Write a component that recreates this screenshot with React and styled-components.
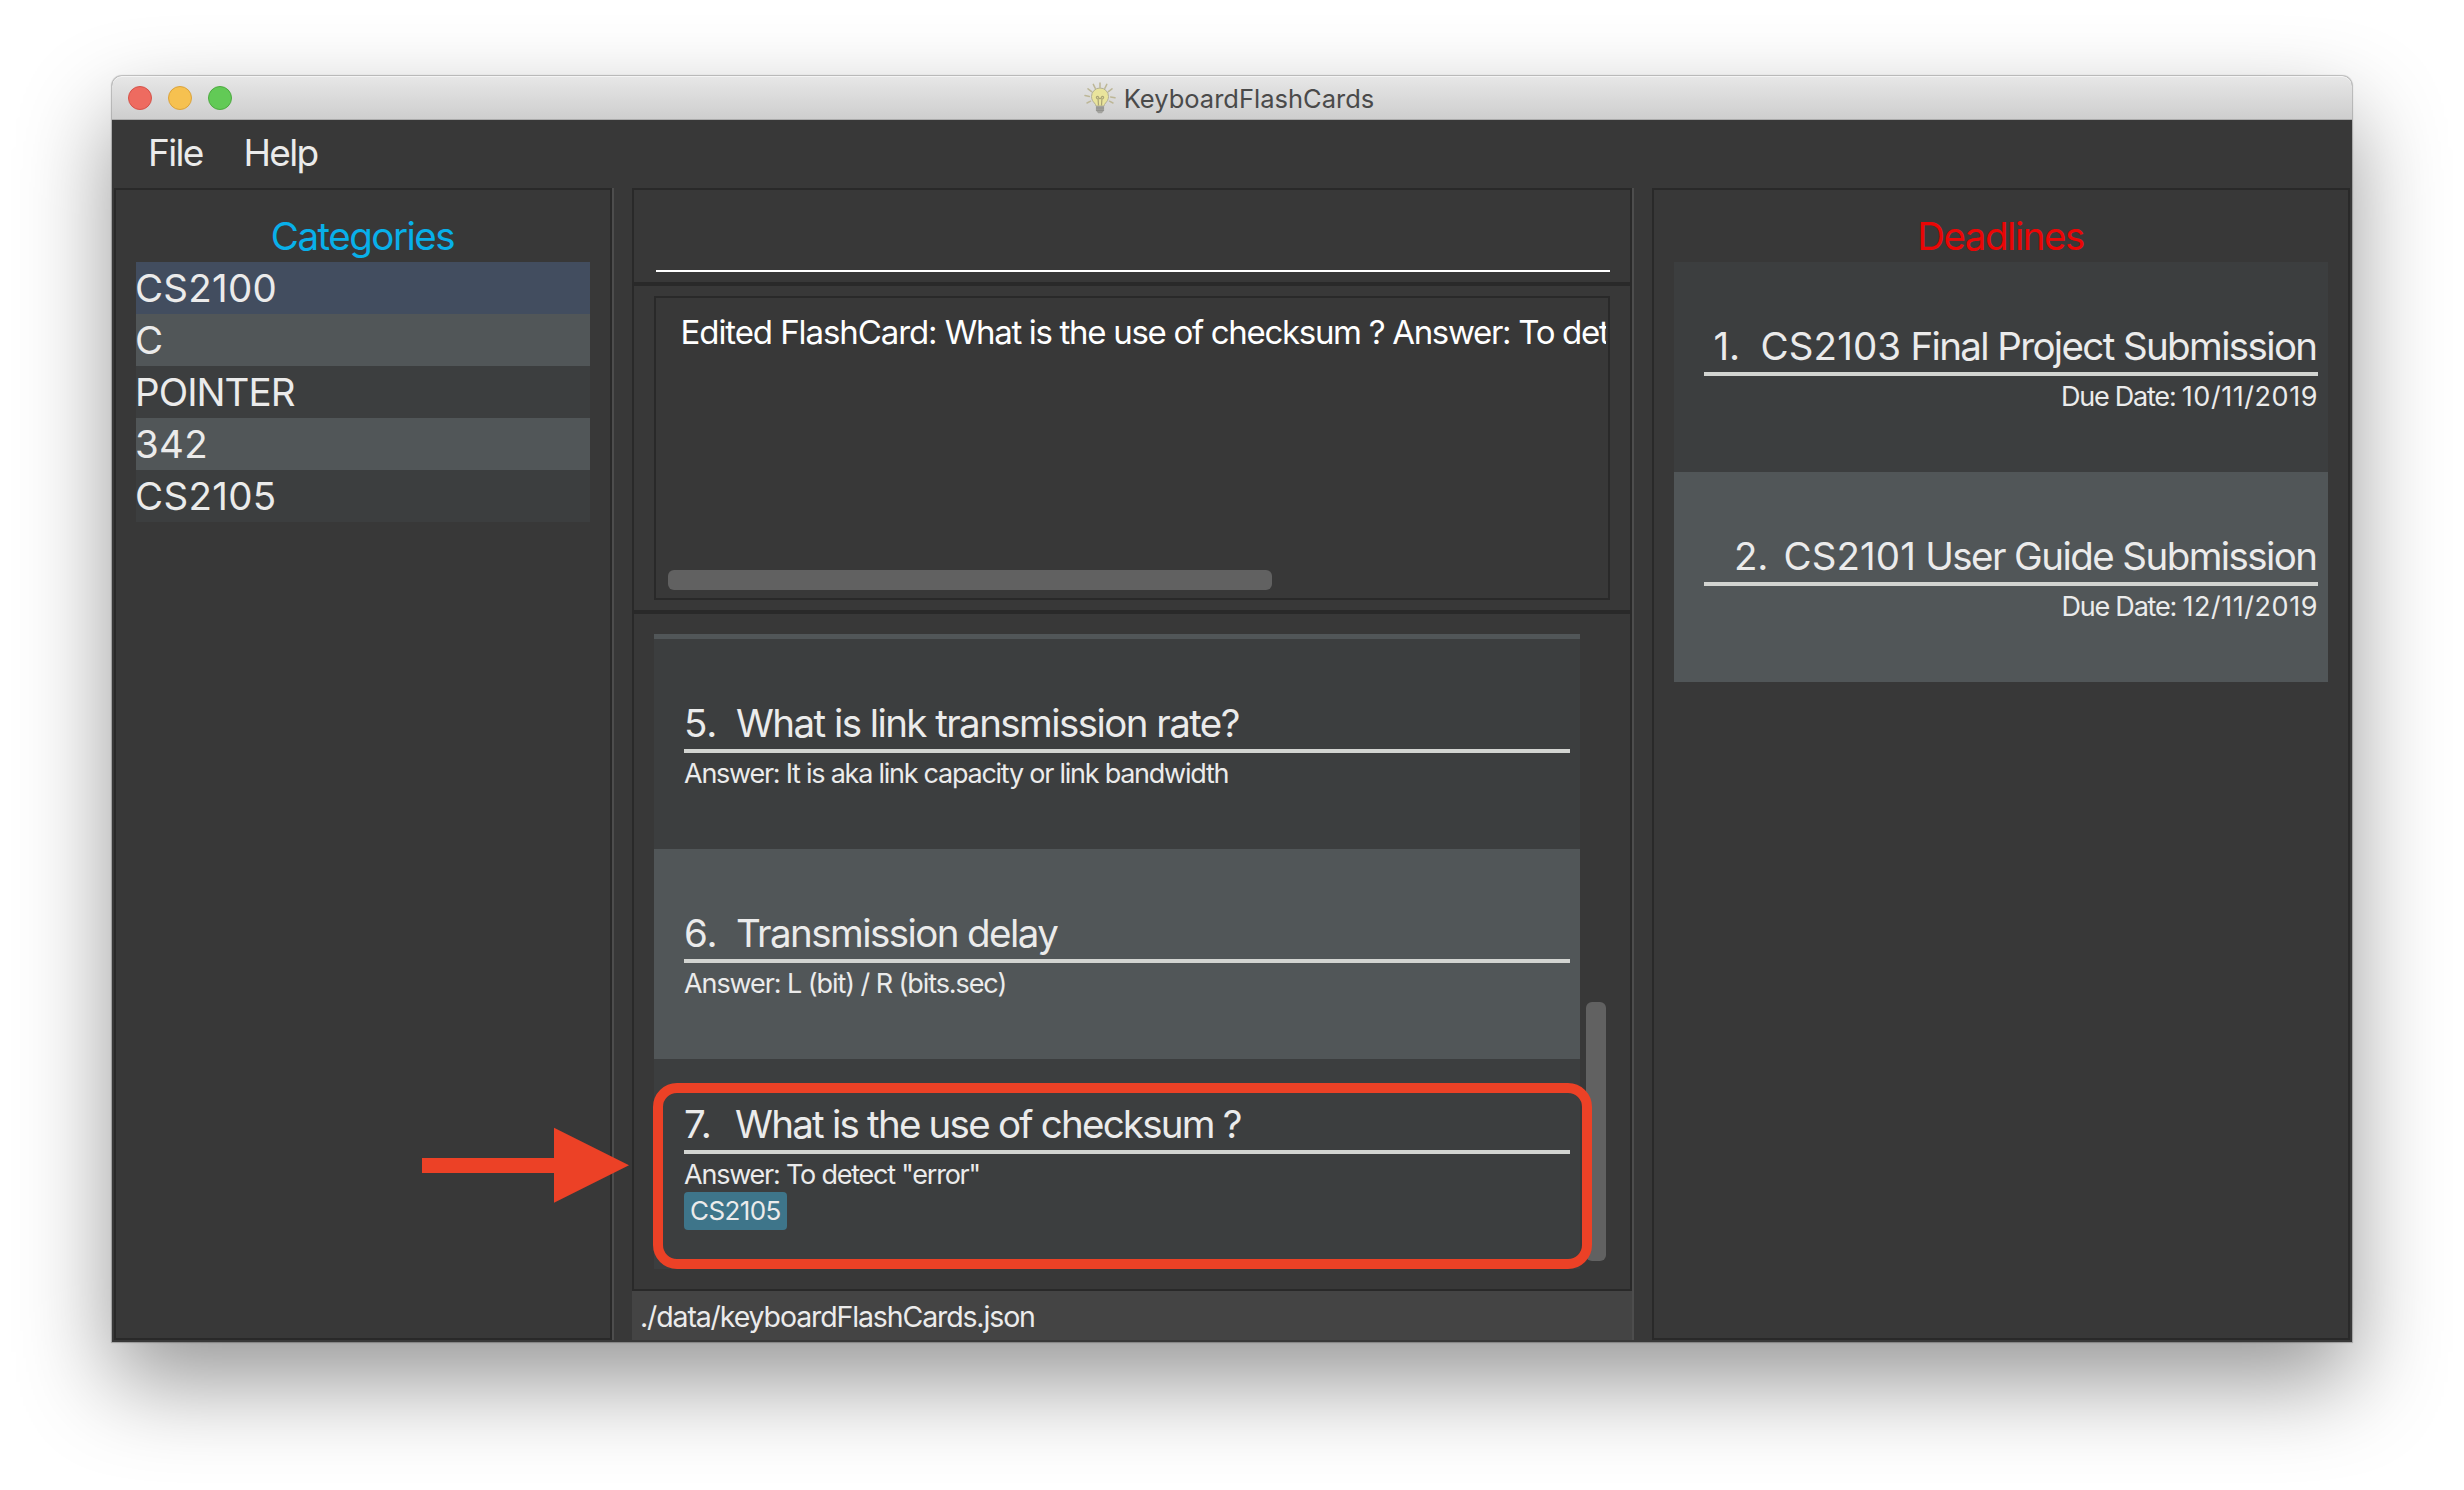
import React from "react";
import styled, { createGlobalStyle, css } from "styled-components";

const color = {
  base: "#383838",
  edge: "#292929",
  ridge: "#4d4d4d",
  rowEven: "#3c3e3f",
  rowOdd: "#515658",
  selected: "#424d5f",
  text: "#ebebeb",
  rule: "#d2d4d1",
  thumb: "#616161",
  mark: "#ec4126",
};

const GlobalStyle = createGlobalStyle`
  html, body { margin: 0; padding: 0; background: #fff; }
  body { font-family: Inter, "Liberation Sans", sans-serif; color: ${color.text}; overflow: hidden; }
  * { box-sizing: border-box; }
`;

const Desktop = styled.div`
  width: 2464px;
  height: 1490px;
  padding: 76px 112px 148px;
  background: #fff;
  overflow: hidden;
`;

const Window = styled.div`
  position: relative;
  display: flex;
  flex-direction: column;
  height: 1266px;
  border-radius: 10px 10px 0 0;
  background: ${color.base};
  box-shadow: 0 0 1px 1px rgba(0, 0, 0, 0.24), 0 40px 92px rgba(0, 0, 0, 0.41);
`;

const TitleBar = styled.header`
  flex: none;
  position: relative;
  display: flex;
  align-items: center;
  justify-content: center;
  height: 44px;
  border-radius: 10px 10px 0 0;
  border-bottom: 1px solid #ababab;
  background: linear-gradient(#e7e7e7, #cecece);
  box-shadow: inset 0 1px 0 #f4f4f4;
`;

const Lights = styled.div`
  position: absolute;
  left: 16px;
  top: 10px;
  display: flex;
  gap: 16px;
`;

const Light = styled.span`
  width: 24px;
  height: 24px;
  border-radius: 50%;
  background: ${(p) => p.$fill};
  border: 1px solid ${(p) => p.$ring};
`;

const Title = styled.div`
  display: flex;
  align-items: center;
  gap: 8px;
  padding-right: 6px;
  font-size: 25.5px;
  color: #4a4a4a;
  white-space: nowrap;
`;

const TitleText = styled.span`
  padding-top: 2px;
`;

const MenuBar = styled.nav`
  flex: none;
  display: flex;
  align-items: center;
  gap: 41px;
  height: 68px;
  padding: 0 36px 3px;
  font-size: 37px;
  letter-spacing: -1.7px;
`;

const Panes = styled.main`
  flex: 1;
  min-height: 0;
  display: grid;
  grid-template-columns: 500px 1002px 698px;
  column-gap: 18px;
  padding: 0 2px 2px;
`;

const SidePane = styled.section`
  border: 2px solid ${color.edge};
  padding: 20px;
  ${(p) =>
    p.$ridge &&
    css`
      margin-right: 2px;
      box-shadow: 2px 0 0 ${color.ridge};
    `}
`;

const Heading = styled.h2`
  margin: 0;
  font-size: 38.5px;
  font-weight: 400;
  line-height: 52px;
  letter-spacing: -1.5px;
  padding-right: 1px;
  text-align: center;
  color: ${(p) => p.$tint};
`;

const List = styled.ul`
  list-style: none;
  margin: 0;
  padding: 0;
`;

const CategoryRow = styled.li`
  height: 52px;
  line-height: 52px;
  font-size: 38.5px;
  letter-spacing: ${(p) => p.$track || 0}px;
  text-indent: -1px;
  background: ${color.rowEven};
  &:nth-child(even) { background: ${color.rowOdd}; }
  &:first-child { background: ${color.selected}; }
`;

const Center = styled.section`
  display: flex;
  flex-direction: column;
  border-right: 2px solid ${color.ridge};
`;

const Stack = styled.div`
  flex: 1;
  min-height: 0;
  display: flex;
  flex-direction: column;
  border: 2px solid ${color.edge};
`;

const CommandArea = styled.div`
  flex: none;
  height: 96px;
  padding: 0 20px 10px 22px;
  border-bottom: 4px solid ${color.edge};
`;

const CommandInput = styled.div`
  height: 82px;
  border-bottom: 2px solid #fff;
`;

const ResultArea = styled.div`
  flex: none;
  height: 328px;
  padding: 10px 20px 10px 20px;
  border-bottom: 4px solid ${color.edge};
`;

const ResultBox = styled.div`
  display: flex;
  flex-direction: column;
  justify-content: space-between;
  height: 304px;
  border: 2px solid ${color.edge};
  padding: 7px 2px 8px 12px;
`;

const ResultText = styled.div`
  padding: 5px 0 0 12.5px;
  font-size: 33px;
  line-height: 44px;
  letter-spacing: -1.31px;
  color: #fff;
  white-space: pre;
  overflow: hidden;
`;

const ResultLead = styled.span`
  letter-spacing: -1.08px;
`;

const HorizontalThumb = styled.div`
  width: 604px;
  height: 20px;
  border-radius: 6px;
  background: ${color.thumb};
`;

const CardArea = styled.div`
  flex: 1;
  min-height: 0;
  display: flex;
  gap: 6px;
  padding: 20px;
`;

const CardViewport = styled.div`
  width: 926px;
  height: 635px;
  overflow: hidden;
`;

const VerticalThumb = styled.div`
  width: 20px;
  height: 259px;
  margin-top: 368px;
  border-radius: 6px;
  background: ${color.thumb};
`;

const PreviousCardEdge = styled.div`
  height: 5px;
  background: ${color.rowOdd};
`;

const Card = styled.article`
  height: 210px;
  padding: ${(p) => (p.$tagged ? 39 : 58)}px 10px 0 30px;
  background: ${(p) => (p.$odd ? color.rowOdd : color.rowEven)};
`;

const CardTitle = styled.div`
  display: flex;
  justify-content: ${(p) => (p.$right ? "flex-end" : "flex-start")};
  height: 56px;
  border-bottom: 4px solid ${color.rule};
  padding-right: ${(p) => (p.$right ? 1.5 : 0)}px;
  font-size: 38.5px;
  line-height: 52px;
  letter-spacing: ${(p) => p.$track || -1.57}px;
  white-space: pre;
`;

const CardNumber = styled.span`
  width: ${(p) => p.$width}px;
  letter-spacing: -0.2px;
`;

const CardDetail = styled.div`
  height: 40px;
  padding-top: 1px;
  font-size: 27px;
  line-height: 40px;
  letter-spacing: ${(p) => p.$track || -1.22}px;
  text-align: ${(p) => (p.$right ? "right" : "left")};
  white-space: pre;
`;

const Digits = styled.span`
  letter-spacing: ${(p) => p.$track}px;
`;

const Tag = styled.span`
  display: flex;
  align-items: center;
  width: 103px;
  height: 38px;
  margin-top: -2px;
  padding: 0 0 1px 6px;
  border-radius: 4px;
  background: #3e758a;
  font-size: 26px;
  letter-spacing: -0.6px;
`;

const StatusBar = styled.footer`
  flex: none;
  height: 49px;
  padding: 1px 0 0 8px;
  background: #444;
  font-size: 28.5px;
  line-height: 49px;
  letter-spacing: -1.13px;
`;

const Highlight = styled.div`
  position: absolute;
  left: 541px;
  top: 1007px;
  width: 939px;
  height: 186px;
  border: 10px solid ${color.mark};
  border-radius: 24px;
`;

const Arrow = styled.svg`
  position: absolute;
  left: 310px;
  top: 1051px;
`;

function Bulb() {
  return (
    <svg width="32" height="32" viewBox="0 0 32 32" fill="none">
      <g stroke="#bdb797" strokeWidth="1.5" strokeLinecap="round">
        <path d="M16 1v4.200M9.300 2.400l2 4M22.800 2.400l-2 4M4 6.800l3.600 2.800M28 6.800l-3.600 2.800M1 13.600l4.400.8M31 15.800l-4.400-.8M3 21l3.600-1.800M29 21l-3.600-1.800" />
      </g>
      <path d="M16 6a8.500 8.500 0 0 0-8.500 8.500c0 3 1.500 4.900 2.900 6.500.9 1.100 1.500 2 1.600 3h8c.1-1 .7-1.900 1.600-3 1.400-1.600 2.900-3.500 2.900-6.500A8.500 8.500 0 0 0 16 6z" fill="#e9e49c" stroke="#b3b096" strokeWidth="1" />
      <path d="M14.500 23.500l-.4-6.500c-1.900.2-2.400-2.700-.6-2.700 1.400 0 .9 2.300 2.500 2.300s1.100-2.300 2.500-2.300c1.800 0 1.300 2.900-.6 2.700l-.4 6.500" stroke="#aaa477" strokeWidth="1.200" />
      <path d="M11.900 24h8.200v4.500l-2.300 2.700h-3.600l-2.300-2.700z" fill="#a3a39e" />
      <path d="M12 26h8M12.200 28.300h7.600" stroke="#8a8a86" strokeWidth=".8" />
    </svg>
  );
}

const categories = [
  { name: "CS2100", track: 0.24 },
  { name: "C" },
  { name: "POINTER", track: -0.95 },
  { name: "342", track: 0.3 },
  { name: "CS2105", track: 0.3 },
];

const cards = [
  { n: 5, title: "What is link transmission rate?", answer: "It is aka link capacity or link bandwidth", track: -1.25 },
  { n: 6, title: "Transmission delay", answer: "L (bit) / R (bits.sec)", track: -1.08 },
  { n: 7, title: "What is the use of checksum ?", titleTrack: -1.77, answer: 'To detect "error"', tag: "CS2105" },
];

const deadlines = [
  { n: 1, width: 47, code: "CS2103", title: "Final Project Submission", due: "10/11/2019", track: -1.63 },
  { n: 2, width: 49.5, code: "CS2101", title: "User Guide Submission", due: "12/11/2019" },
];

export default function App() {
  return (
    <Desktop>
      <GlobalStyle />
      <Window>
        <TitleBar>
          <Lights>
            <Light $fill="#ee6b60" $ring="#d5534a" />
            <Light $fill="#f6c150" $ring="#dba33c" />
            <Light $fill="#62ca56" $ring="#4eaa41" />
          </Lights>
          <Title>
            <Bulb />
            <TitleText>KeyboardFlashCards</TitleText>
          </Title>
        </TitleBar>
        <MenuBar>
          <span>File</span>
          <span>Help</span>
        </MenuBar>
        <Panes>
          <SidePane $ridge>
            <Heading $tint="#08b0ea">Categories</Heading>
            <List>
              {categories.map((c) => (
                <CategoryRow key={c.name} $track={c.track}>
                  {c.name}
                </CategoryRow>
              ))}
            </List>
          </SidePane>
          <Center>
            <Stack>
              <CommandArea>
                <CommandInput />
              </CommandArea>
              <ResultArea>
                <ResultBox>
                  <ResultText>
                    <ResultLead>Edited FlashCard: </ResultLead>
                    What is the use of checksum ? Answer: To det
                  </ResultText>
                  <HorizontalThumb />
                </ResultBox>
              </ResultArea>
              <CardArea>
                <CardViewport>
                  <PreviousCardEdge />
                  {cards.map((c) => (
                    <Card key={c.n} $odd={c.n % 2 === 0} $tagged={!!c.tag}>
                      <CardTitle $track={c.titleTrack}>
                        <CardNumber $width={c.tag ? 51 : 52}>{c.n}.</CardNumber>
                        <span>{c.title}</span>
                      </CardTitle>
                      <CardDetail $track={c.track}>{`Answer: ${c.answer}`}</CardDetail>
                      {c.tag && <Tag>{c.tag}</Tag>}
                    </Card>
                  ))}
                </CardViewport>
                <VerticalThumb />
              </CardArea>
            </Stack>
            <StatusBar>./data/keyboardFlashCards.json</StatusBar>
          </Center>
          <SidePane>
            <Heading $tint="#ea0606">Deadlines</Heading>
            {deadlines.map((d) => (
              <Card key={d.n} $odd={d.n % 2 === 0}>
                <CardTitle $right $track={d.track}>
                  <CardNumber $width={d.width}>{d.n}.</CardNumber>
                  <span>
                    <Digits $track={0.1}>{d.code}</Digits>
                    {` ${d.title}`}
                  </span>
                </CardTitle>
                <CardDetail $right>
                  {"Due Date: "}
                  <Digits $track={0.55}>{d.due}</Digits>
                </CardDetail>
              </Card>
            ))}
          </SidePane>
        </Panes>
        <Highlight />
        <Arrow width="208" height="76" viewBox="0 0 208 76">
          <path d="M0 31h132V.7L207 38.200 132 75.700V46H0z" fill={color.mark} />
        </Arrow>
      </Window>
    </Desktop>
  );
}
